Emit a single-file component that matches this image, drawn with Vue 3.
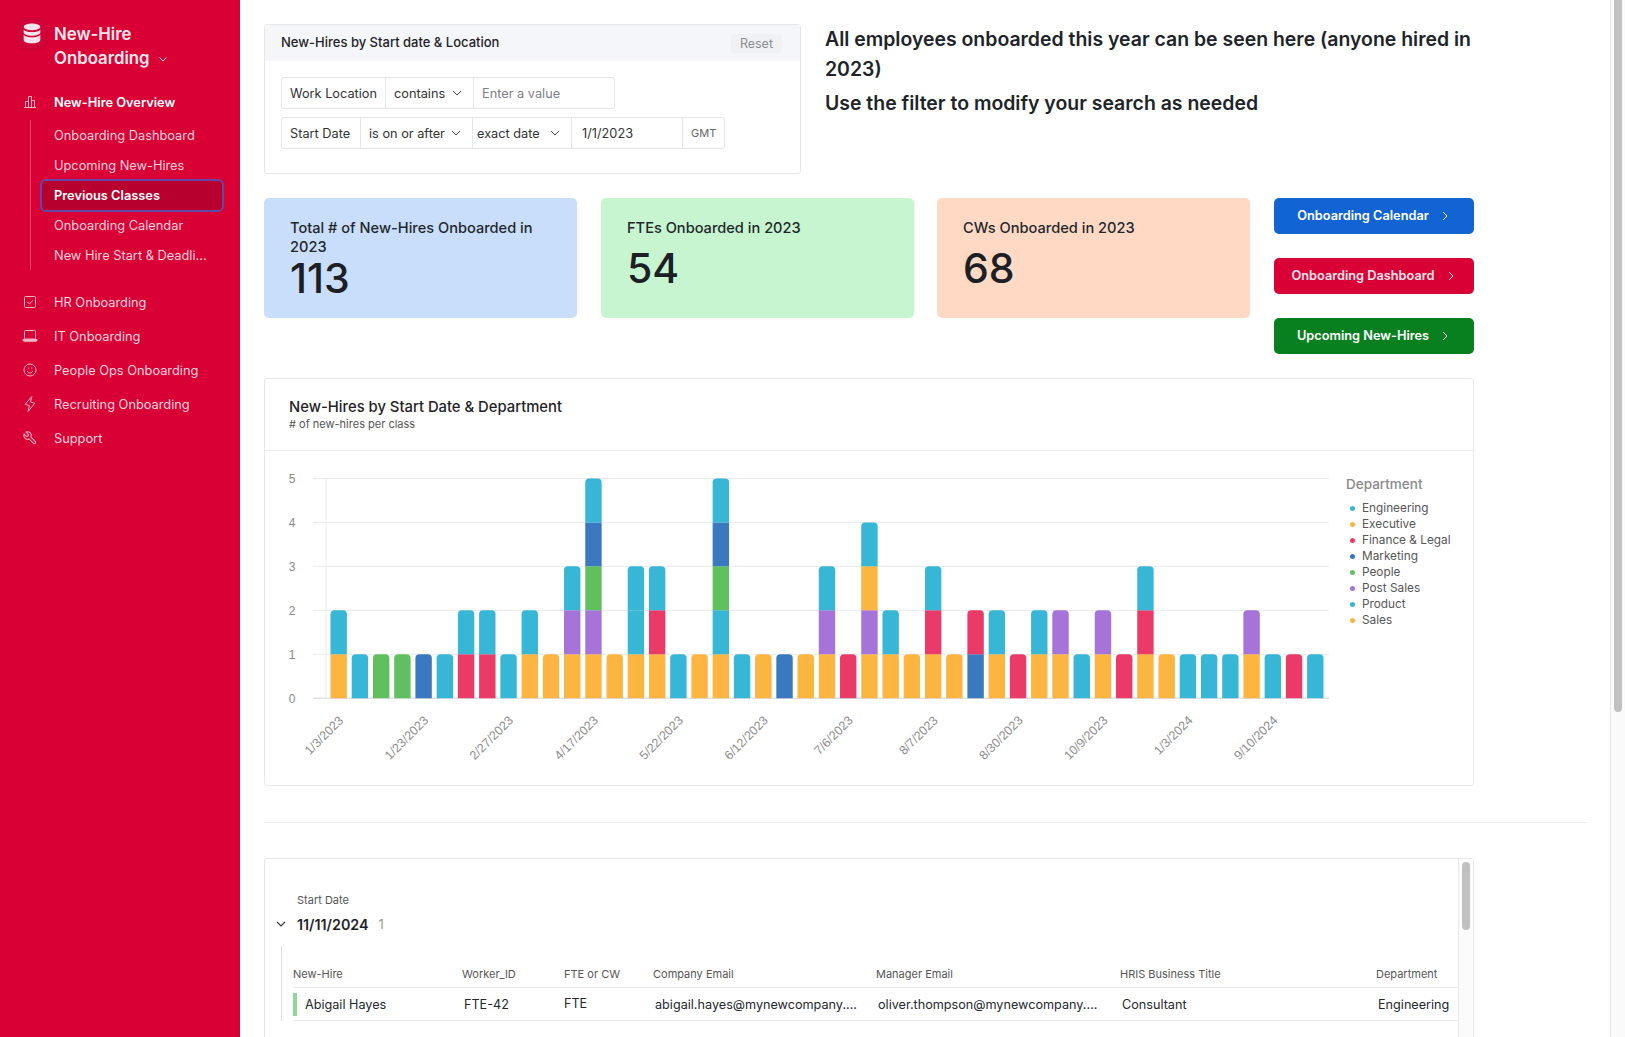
<script setup>
const C = { c: '#38b6d6', o: '#fbb540', r: '#ea3a68', b: '#3a78c0', g: '#60c060', p: '#a673d8' }
const stacks = ['oc','c','g','g','b','c','rc','rc','c','oc','o','opc','opgbc','o','occ','orc','c','o','ocgbc','c','o','b','o','opc','r','opoc','oc','o','orc','o','br','oc','r','oc','op','c','op','r','orc','o','c','c','c','op','c','r','c']
const X0 = 337.7, PITCH = 21.23, W = 16.4, Y0 = 698.2, UNIT = 43.95, TOP = 378, LEFT = 264
const bars = stacks.map((s, i) => {
  const x = X0 + i * PITCH - W / 2 - LEFT
  return [...s].map((k, j) => {
    const y = Y0 - TOP - (j + 1) * UNIT
    const rt = j === s.length - 1 ? 4 : 0
    return {
      fill: C[k],
      d: `M${x} ${y + UNIT}V${y + rt}Q${x} ${y} ${x + rt} ${y}H${x + W - rt}Q${x + W} ${y} ${x + W} ${y + rt}V${y + UNIT}Z`
    }
  })
}).flat()
const yTicks = [0, 1, 2, 3, 4, 5].map(v => ({ v, y: Y0 - TOP - v * UNIT }))
const xLabels = ['1/3/2023','1/23/2023','2/27/2023','4/17/2023','5/22/2023','6/12/2023','7/6/2023','8/7/2023','8/30/2023','10/9/2023','1/3/2024','9/10/2024']
  .map((t, i) => ({ t, x: X0 + i * 4 * PITCH - LEFT + 5.5, y: Y0 - TOP + 23 }))
const legend = [['Engineering', C.c], ['Executive', C.o], ['Finance & Legal', C.r], ['Marketing', C.b], ['People', C.g], ['Post Sales', C.p], ['Product', C.c], ['Sales', C.o]]
const subNav = ['Onboarding Dashboard', 'Upcoming New-Hires', 'Previous Classes', 'Onboarding Calendar', 'New Hire Start & Deadli...']
const cols = ['New-Hire', 'Worker_ID', 'FTE or CW', 'Company Email', 'Manager Email', 'HRIS Business Title', 'Department']
const row = ['Abigail Hayes', 'FTE-42', 'FTE', 'abigail.hayes@mynewcompany....', 'oliver.thompson@mynewcompany....', 'Consultant', 'Engineering']
</script>

<template>
  <div class="app">
    <aside class="side">
      <div class="brand">
        <div class="logo">
          <svg width="20" height="21" viewBox="0 0 22 24" fill="#fde3e9">
            <ellipse cx="11" cy="4.500" rx="9.500" ry="3.800" />
            <path d="M1.500 7.400c1.600 2 5.300 3 9.500 3s7.900-1 9.500-3v3.400c0 2-4.300 3.700-9.500 3.700s-9.500-1.700-9.500-3.700z" />
            <path d="M1.500 13.300c1.600 2 5.300 3 9.500 3s7.900-1 9.500-3v6c0 2.200-4.300 3.900-9.500 3.900s-9.500-1.700-9.500-3.900z" />
          </svg>
        </div>
        <div class="brand-name">
          New-Hire<br />Onboarding
          <svg class="brand-chev" width="10" height="10" viewBox="0 0 10 10"><path d="M1.500 3.500 5 7l3.500-3.500" fill="none" stroke="currentColor" stroke-width="1" /></svg>
        </div>
      </div>

      <div class="nav-item strong">
        <svg class="nav-ico" width="14" height="14" viewBox="0 0 14 14" fill="none" stroke="currentColor" stroke-width="1">
          <path d="M1 12.500h12M2.500 12.500V6.500h3v6M5.500 12.500V1.500h3v11M8.500 12.500V5.500h3v7" />
        </svg>
        New-Hire Overview
      </div>
      <div class="sub-list">
        <div v-for="(s, i) in subNav" :key="s" class="sub-item" :class="{ active: i === 2 }"><span class="sub-text">{{ s }}</span></div>
      </div>

      <div class="nav-group">
        <div class="nav-item">
          <svg class="nav-ico" width="14" height="14" viewBox="0 0 14 14" fill="none" stroke="currentColor" stroke-width="1">
            <rect x="1.500" y="1.500" width="11" height="11" rx="1" /><path d="m4.500 7 2 2 3.200-3.500" />
          </svg>
          HR Onboarding
        </div>
        <div class="nav-item">
          <svg class="nav-ico" width="16" height="14" viewBox="0 0 16 14" fill="none" stroke="currentColor" stroke-width="1">
            <rect x="2.500" y="1.500" width="11" height="8.500" rx=".8" /><path d="M1 10.500h14v.8a1 1 0 0 1-1 1H2a1 1 0 0 1-1-1z" fill="currentColor" />
          </svg>
          IT Onboarding
        </div>
        <div class="nav-item">
          <svg class="nav-ico" width="14" height="14" viewBox="0 0 14 14" fill="none" stroke="currentColor" stroke-width="1">
            <circle cx="7" cy="7" r="6" /><path d="M4.300 8.200c.6 1.300 1.600 1.900 2.700 1.900s2.100-.6 2.700-1.900" /><path d="M4.800 5.200h.8M8.400 5.200h.8" stroke-width="1.200" />
          </svg>
          People Ops Onboarding
        </div>
        <div class="nav-item">
          <svg class="nav-ico" width="14" height="17" viewBox="0 0 14 17" fill="none" stroke="currentColor" stroke-width="1">
            <path d="M8.800 1 2.200 8.800l4.300 1.300L5 16l6.800-8.200-4.300-1.200z" stroke-linejoin="round" />
          </svg>
          Recruiting Onboarding
        </div>
        <div class="nav-item">
          <svg class="nav-ico" width="15" height="15" viewBox="0 0 24 24" fill="none" stroke="currentColor" stroke-width="1.700" stroke-linejoin="round">
            <g transform="translate(24 0) scale(-1 1)">
              <path d="M14.700 6.300a1 1 0 0 0 0 1.400l1.600 1.600a1 1 0 0 0 1.400 0l3.770-3.770a6 6 0 0 1-7.940 7.940l-6.910 6.910a2.120 2.120 0 0 1-3-3l6.910-6.910a6 6 0 0 1 7.940-7.940l-3.760 3.760z" />
            </g>
          </svg>
          Support
        </div>
      </div>
    </aside>

    <main class="main">
      <div class="top-row">
        <section class="filter">
          <div class="filter-head">
            <span>New-Hires by Start date &amp; Location</span>
            <span class="reset">Reset</span>
          </div>
          <div class="filter-body">
            <div class="f-row">
              <div class="f-cell w103">Work Location</div>
              <div class="f-cell w88">contains
                <svg class="chev" width="10" height="10" viewBox="0 0 10 10"><path d="M1 3l4 4 4-4" fill="none" stroke="#444" stroke-width="1" /></svg>
              </div>
              <div class="f-cell w141 placeholder">Enter a value</div>
            </div>
            <div class="f-row">
              <div class="f-cell w78">Start Date</div>
              <div class="f-cell w112">is on or after
                <svg class="chev" width="10" height="10" viewBox="0 0 10 10"><path d="M1 3l4 4 4-4" fill="none" stroke="#444" stroke-width="1" /></svg>
              </div>
              <div class="f-cell w99 tight">exact date
                <svg class="chev" width="10" height="10" viewBox="0 0 10 10"><path d="M1 3l4 4 4-4" fill="none" stroke="#444" stroke-width="1" /></svg>
              </div>
              <div class="f-cell w111">1/1/2023</div>
              <div class="f-cell w42 gmt">GMT</div>
            </div>
          </div>
        </section>
        <div class="intro">
          <p>All employees onboarded this year can be seen here (anyone hired in 2023)</p>
          <p class="second">Use the filter to modify your search as needed</p>
        </div>
      </div>

      <div class="kpi-row">
        <div class="kpi blue"><div class="kpi-label">Total # of New-Hires Onboarded in 2023</div><div class="kpi-num">113</div></div>
        <div class="kpi green single"><div class="kpi-label">FTEs Onboarded in 2023</div><div class="kpi-num">54</div></div>
        <div class="kpi peach single"><div class="kpi-label">CWs Onboarded in 2023</div><div class="kpi-num">68</div></div>
        <div class="btns">
          <div class="btn b-blue">Onboarding Calendar<svg class="btn-arrow" width="8" height="10" viewBox="0 0 8 10"><path d="M2 1l4 4-4 4" fill="none" stroke="currentColor" stroke-width="1" /></svg></div>
          <div class="btn b-red">Onboarding Dashboard<svg class="btn-arrow" width="8" height="10" viewBox="0 0 8 10"><path d="M2 1l4 4-4 4" fill="none" stroke="currentColor" stroke-width="1" /></svg></div>
          <div class="btn b-green">Upcoming New-Hires<svg class="btn-arrow" width="8" height="10" viewBox="0 0 8 10"><path d="M2 1l4 4-4 4" fill="none" stroke="currentColor" stroke-width="1" /></svg></div>
        </div>
      </div>

      <section class="chart-card">
        <div class="chart-head">
          <div class="chart-title">New-Hires by Start Date &amp; Department</div>
          <div class="chart-sub"># of new-hires per class</div>
        </div>
        <div class="chart-body">
          <svg class="plot" width="1066" height="334" viewBox="0 73 1066 334">
            <line x1="61" x2="61" :y1="yTicks[5].y" :y2="yTicks[0].y" stroke="#ececec" />
            <g v-for="t in yTicks" :key="t.v">
              <line x1="48" x2="1064" :y1="t.y" :y2="t.y" :stroke="t.v === 0 ? '#d4d6da' : '#e8e9ec'" />
              <text x="27" :y="t.y + 5" text-anchor="middle" class="tick">{{ t.v }}</text>
            </g>
            <path v-for="(b, i) in bars" :key="i" :d="b.d" :fill="b.fill" />
            <text v-for="l in xLabels" :key="l.t" :x="l.x" :y="l.y" text-anchor="end" class="tick xt" :transform="`rotate(-45 ${l.x} ${l.y})`">{{ l.t }}</text>
          </svg>
          <div class="legend">
            <div class="legend-title">Department</div>
            <div v-for="l in legend" :key="l[0]" class="legend-item">
              <span class="dot" :style="{ background: l[1] }"></span>{{ l[0] }}
            </div>
          </div>
        </div>
      </section>

      <div class="divider"></div>

      <section class="table-card">
        <div class="table-inner">
          <div class="group-label">Start Date</div>
          <div class="group-val">
            <svg class="group-chev" width="10" height="10" viewBox="0 0 10 10"><path d="M1 3l4 4 4-4" fill="none" stroke="#333" stroke-width="1.100" /></svg>
            <span class="group-date">11/11/2024</span><span class="group-count">1</span>
          </div>
          <div class="group-rows">
            <div class="t-row t-head">
              <div v-for="c in cols" :key="c" class="t-cell">{{ c }}</div>
            </div>
            <div class="t-row t-data">
              <div v-for="(c, i) in row" :key="c" class="t-cell" :class="{ first: i === 0, fte: i === 2 }">{{ c }}</div>
            </div>
          </div>
        </div>
        <div class="inner-scroll"><div class="inner-thumb"></div></div>
      </section>
    </main>

    <div class="page-scroll"><div class="page-thumb"></div></div>
  </div>
</template>

<style scoped>
.app { display: flex; height: 1037px; width: 1625px; overflow: hidden; background: #fff; font-family: Inter, "Liberation Sans", sans-serif; color: #1f2328; }

.side { width: 240px; flex: none; background: #d90036; color: #fbd3dd; font-size: 12.800px; padding-top: 18px; box-sizing: border-box; }
.brand { display: flex; padding-left: 17px; }
.logo { width: 30px; height: 30px; border-radius: 7px; background: #cf0438; box-shadow: 0 1px 2px rgba(120, 0, 30, .25); display: flex; align-items: center; justify-content: center; flex: none; }
.brand-name { margin: 4px 0 0 7px; font-size: 16.800px; font-weight: 600; line-height: 24px; color: #fde8ed; }
.brand-chev { margin-left: 4px; }
.nav-item { position: relative; height: 34px; display: flex; align-items: center; padding-left: 54px; box-sizing: border-box; }
.nav-item .nav-ico { color: #f8b2c3; }
.nav-item.strong { height: 30px; margin-top: 17px; color: #fff; font-weight: 600; }
.nav-ico { position: absolute; left: 30px; top: 50%; transform: translate(-50%, -50%); }
.sub-list { margin: 3px 0 0 30px; border-left: 1px solid rgba(255, 255, 255, .28); height: 150px; }
.sub-item { height: 30px; margin: 0 16px 0 9px; padding-left: 14px; display: flex; align-items: center; border-radius: 6px; box-sizing: border-box; }
.sub-text { white-space: nowrap; }
.sub-item.active { height: 33px; margin-top: -1px; margin-bottom: -2px; padding-left: 12px; padding-bottom: 1px; background: #b8002f; color: #fff; font-weight: 600; border: 2px solid #6246a8; position: relative; }
.nav-group { margin-top: 15px; }

.main { width: 1370px; flex: none; padding: 24px 0 0 24px; box-sizing: border-box; }
.top-row { display: flex; gap: 24px; }
.filter { width: 537px; height: 150px; flex: none; border: 1px solid #e6e8ec; border-radius: 3px; box-sizing: border-box; }
.filter-head { height: 36px; padding: 0 16px 2px; background: #f5f6f9; display: flex; justify-content: space-between; align-items: center; font-size: 13px; font-weight: 500; box-sizing: border-box; }
.reset { font-weight: 400; color: #8a8d92; background: #f0f1f4; padding: 2px 9px; border-radius: 3px; font-size: 12.500px; margin: 3px 2px 0 0; }
.filter-body { padding: 16px 16px; display: flex; flex-direction: column; gap: 8px; align-items: flex-start; }
.f-row { display: flex; height: 32px; border: 1px solid #e4e6ea; border-radius: 3px; box-sizing: border-box; font-size: 12.750px; color: #333; }
.f-cell { display: flex; align-items: center; padding-left: 8px; box-sizing: border-box; border-left: 1px solid #e4e6ea; white-space: nowrap; position: relative; }
.f-cell:first-child { border-left: 0; }
.f-cell.tight { padding-left: 4px; }
.chev { position: absolute; right: 11px; top: 10px; }
.w103 { width: 103px; } .w88 { width: 88px; } .w141 { width: 141px; }
.w78 { width: 78px; } .w112 { width: 112px; } .w99 { width: 99px; } .w111 { width: 111px; } .w42 { width: 42px; }
.placeholder { color: #7d8086; }
.gmt { color: #666; font-size: 11px; }
.w111 { padding-left: 10px; }
.intro { font-size: 19.450px; font-weight: 600; line-height: 29.500px; color: #202429; width: 660px; margin-top: 1px; }
.intro p { margin: 0; }
.intro .second { margin-top: 5px; }

.kpi-row { display: flex; margin-top: 24px; height: 156px; align-items: flex-start; width: 1210px; }
.kpi { width: 313px; height: 120px; border-radius: 5px; padding: 21px 26px; box-sizing: border-box; margin-right: 24px; font-size: 14.600px; font-weight: 500; line-height: 19px; color: #23272c; flex: none; }
.kpi.green { margin-right: 23px; }
.kpi.blue { background: #c9defb; }
.kpi.green { background: #c6f5cf; }
.kpi.peach { background: #ffd9c4; }
.kpi-num { font-size: 41px; font-weight: 500; line-height: 44px; margin-top: -1px; color: #1c2024; }
.single .kpi-num { margin-top: 8px; }
.btns { display: flex; flex-direction: column; gap: 24px; width: 200px; flex: none; }
.btn { height: 36px; padding: 0 2px 1px 0; box-sizing: border-box; border-radius: 5px; display: flex; align-items: center; justify-content: center; color: #fff; font-size: 12.750px; font-weight: 600; }
.btn-arrow { margin-left: 12px; }
.b-blue { background: #1264d4; }
.b-red { background: #d90036; color: #fde3ea; }
.b-green { background: #08801f; }

.chart-card { width: 1210px; height: 408px; margin-top: 24px; border: 1px solid #e6e8ec; border-radius: 3px; box-sizing: border-box; }
.chart-head { height: 72px; border-bottom: 1px solid #eceef1; padding: 19px 24px 0; box-sizing: border-box; }
.chart-title { font-size: 14.800px; font-weight: 500; line-height: 19px; }
.chart-sub { font-size: 11px; color: #555; line-height: 13px; margin-top: 1px; }
.chart-body { display: flex; }
.plot { display: block; flex: none; }
.tick { font-size: 12px; fill: #888; font-family: "Liberation Sans", Arial, sans-serif; }
.xt { font-size: 12.500px; fill: #8c8c8c; }
.legend { padding: 22px 0 0 15px; }
.legend-title { font-size: 13.500px; color: #8a8a8a; font-weight: 500; line-height: 22px; margin-bottom: 5px; }
.legend-item { font-size: 11.800px; color: #565656; line-height: 16px; display: flex; align-items: center; white-space: nowrap; }
.dot { width: 5px; height: 5px; border-radius: 50%; margin: 0 7px 0 4px; }

.divider { width: 1323px; height: 1px; background: #e9ebee; margin-top: 36px; }

.table-card { width: 1210px; height: 300px; margin-top: 35px; border: 1px solid #e6e8ec; border-radius: 3px; box-sizing: border-box; display: flex; }
.table-inner { flex: 1; padding: 34px 0 0 16px; box-sizing: border-box; }
.group-label { font-size: 11px; line-height: 14px; color: #555; margin-left: 16px; }
.group-val { position: relative; margin-top: 7px; height: 20px; margin-left: 16px; display: flex; align-items: center; gap: 10px; }
.group-chev { position: absolute; left: -21px; top: 5px; }
.group-date { font-size: 14.300px; font-weight: 600; color: #1f2328; }
.group-count { font-size: 13px; color: #9a9a9a; }
.group-rows { margin: 12px 0 0 0; border-left: 1px solid #dcdee2; height: 75px; padding-left: 11px; }
.t-row { display: grid; grid-template-columns: 169px 102px 89px 223px 244px 256px 81px; border-bottom: 1px solid #e6e8ec; }
.t-head { height: 42px; align-items: end; padding-bottom: 6px; box-sizing: border-box; font-size: 11px; color: #555; }
.t-data { height: 33px; box-sizing: border-box; align-items: center; font-size: 12.650px; color: #24282d; position: relative; }
.t-head .t-cell { line-height: 14px; }
.t-data .t-cell { padding-left: 2px; white-space: nowrap; }
.t-data .first { padding-left: 12px; position: relative; align-self: stretch; display: flex; align-items: center; }
.t-data .fte { padding: 0 0 2px; }
.t-data .first::before { content: ""; position: absolute; left: 0; top: 5px; bottom: 4px; width: 3.500px; background: #8fd89a; }
.inner-scroll { width: 15px; flex: none; border-left: 1px solid #e6e8ec; box-sizing: border-box; padding: 3px 3px; background: #fbfbfb; }
.inner-thumb { width: 8px; height: 68px; border-radius: 4px; background: #c1c1c1; }

.page-scroll { flex: 1; border-left: 1px solid #e6e6e6; background: #fafafa; padding-left: 3px; box-sizing: border-box; }
.page-thumb { width: 8px; height: 712px; background: #c1c1c1; border-radius: 0 0 4px 4px; }
</style>

<style>
html, body { margin: 0; overflow: hidden; background: #fff; }
</style>
